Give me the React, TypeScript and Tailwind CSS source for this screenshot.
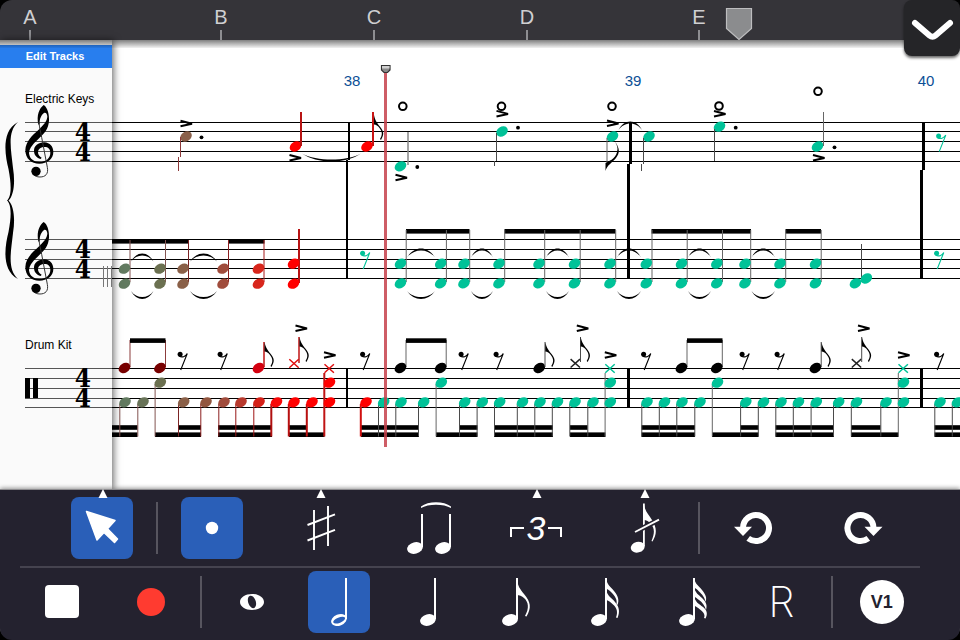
import type { ReactNode } from "react";

const TEAL = "#00c298";
const RED = "#ff0000";
const INK = "#000000";
const STEM = "#4a4a4a";
const SOFT_STEM = "#666666";

const STAVES = [
  [122, 131, 141, 151, 161],
  [239, 249, 259, 268, 278],
  [368, 378, 388, 398, 407],
];

/* ---------- notation primitives ---------- */

function Head({ x, y, c = TEAL }: { x: number; y: number; c?: string }) {
  return <ellipse cx={x} cy={y} rx="6.2" ry="4.7" fill={c} transform={`rotate(-32 ${x} ${y})`} />;
}

function Stem({ x, y1, y2, c = STEM, w = 1 }: { x: number; y1: number; y2: number; c?: string; w?: number }) {
  return <rect x={x - w / 2} y={y1} width={w} height={y2 - y1} fill={c} />;
}

function Beam({ x1, x2, y }: { x1: number; x2: number; y: number }) {
  return <rect x={x1} y={y} width={x2 - x1} height="4.6" fill={INK} />;
}

function Accent({ x, y }: { x: number; y: number }) {
  return <path d={`M${x - 6.5} ${y - 2.8} L${x + 5} ${y + 0.2} L${x - 6.5} ${y + 2.8}`} fill="none" stroke={INK} strokeWidth="2" />;
}

function Ring({ x, y }: { x: number; y: number }) {
  return <circle cx={x} cy={y} r="3.8" fill="none" stroke={INK} strokeWidth="2" />;
}

function Dot({ x, y }: { x: number; y: number }) {
  return <circle cx={x} cy={y} r="1.9" fill={INK} />;
}

function Cross({ x, y, c }: { x: number; y: number; c: string }) {
  return <path d={`M${x - 4.7} ${y - 4.2} L${x + 4.7} ${y + 4.2} M${x - 4.7} ${y + 4.2} L${x + 4.7} ${y - 4.2}`} stroke={c} strokeWidth="1.5" />;
}

function Tie({ x1, x2, y, up = true, h = 9 }: { x1: number; x2: number; y: number; up?: boolean; h?: number }) {
  const s = up ? -1 : 1;
  const q = (x2 - x1) * 0.25;
  const outer = y + (s * (h + 0.5)) / 0.75;
  const inner = y + (s * (h - 1.4)) / 0.75;
  return <path d={`M${x1} ${y} C${x1 + q} ${outer} ${x2 - q} ${outer} ${x2} ${y} C${x2 - q} ${inner} ${x1 + q} ${inner} ${x1} ${y}Z`} fill={INK} />;
}

function Rest({ x, y, c = INK }: { x: number; y: number; c?: string }) {
  return (
    <g transform={`translate(${x} ${y})`}>
      <circle cx="2.6" cy="2.6" r="2.5" fill={c} />
      <path d="M1.5 4.4 C4.5 6 8 5.2 9.8 1.8 L3.2 18.3" fill="none" stroke={c} strokeWidth="1.1" />
    </g>
  );
}

function Flag({ x, y }: { x: number; y: number }) {
  return <path transform={`translate(${x} ${y})`} d="M0 0 C1 6 4 9 7 13 C10.5 18 9.5 20 7 25 L6 24 C8.5 20 8.5 17 5.5 13 C4 11 2 9.5 0 9.5Z" fill={INK} />;
}

/* ---------- score data ---------- */

const CHORDS_PLAYED: [number, string, string][] = [
  [124.5, "#627a60", "#835552"],
  [160, "#6b7050", "#835552"],
  [183, "#8a6048", "#7c2424"],
  [223, "#a04c3c", "#8c2020"],
  [258.5, "#d8261c", "#a81c1c"],
];
const CHORDS = [400.5, 440.7, 464, 499, 539, 574.5, 610, 646.3, 681.5, 716.8, 745, 780, 815.5];
const CHORD_BEAMS = [[406, 469.5], [504.5, 615.5], [651.5, 751], [785.5, 821]];
const TIES = [[407, 435], [471, 493], [546, 569], [617, 641], [688, 711], [751.5, 775]];

const KICKS_PLAYED: [number, string, string, number][] = [
  [125, "#627a60", "#835552", 1],
  [143, "#687358", "#835552", 1],
  [183.7, "#8a6048", "#7c2424", 1],
  [206, "#92563f", "#8c2020", 1],
  [224, "#a04c3c", "#8c2020", 1],
  [241, "#b83a2e", "#981818", 1],
  [259, "#d42018", "#a01414", 1],
  [276.5, "#f80808", "#b01010", 2],
  [294, RED, "#b81010", 2],
  [312, RED, "#b81010", 2],
  [366, RED, "#d01010", 2],
];
const KICKS = [
  383.7, 401, 423.7, 464.7, 482.3, 499.7, 522.5, 540, 557.5, 575, 593, 647, 664.5, 682, 700, 745.8, 763.5, 781, 798.5,
  816.3, 838.7, 856.5, 886, 940, 957.5,
];
const PRIMARY_BEAMS = [
  [112, 137.5], [155, 201], [218, 272], [289, 324.5], [361, 419], [436, 477.5], [494, 553], [570, 605.5],
  [641.5, 695], [712, 758.5], [775.5, 834], [851, 898.5], [934.5, 960],
];
const SECONDARY_BEAMS = [
  [112, 137.5], [178.5, 201], [218, 272], [289, 306.5], [361, 419], [459, 477.5], [494, 553], [570, 587.5],
  [641.5, 695], [740, 758.5], [775.5, 834], [851, 880.5], [934.5, 960],
];
const DRUM_RESTS = [177.5, 217.5, 360, 458.5, 493.5, 641, 739.5, 774.5, 934];

function UpperKeys() {
  return (
    <g>
      <Head x={186} y={136.5} c="#8a604a" />
      <Stem x={180.5} y1={137} y2={157} c="#8c3838" />
      <Stem x={178.5} y1={157} y2={171} c="#8c3838" />
      <Accent x={187} y={123.5} />
      <Dot x={201.5} y={137.3} />

      <Head x={295.5} y={146.5} c={RED} />
      <Stem x={301} y1={112} y2={146} c="#b81414" w={2} />
      <Accent x={296} y={157.8} />
      <Tie x1={302} x2={361} y={153.5} up={false} h={7.5} />
      <Head x={367} y={146.5} c={RED} />
      <Stem x={373} y1={112} y2={146} c="#c81414" w={2} />
      <Flag x={374} y={115} />

      <Head x={400.5} y={166.3} />
      <Stem x={408} y1={132} y2={165} c="#888888" w={1.5} />
      <Accent x={402} y={177.5} />
      <Dot x={417.3} y={167} />
      <Ring x={402.8} y={106.3} />

      <Head x={502} y={131.5} />
      <Stem x={496.5} y1={133} y2={161} />
      <Stem x={494.5} y1={161} y2={166} />
      <Accent x={503} y={113.7} />
      <Dot x={518} y={127.7} />
      <Ring x={501.5} y={106.3} />

      <Head x={612.5} y={136.5} />
      <Stem x={607} y1={138} y2={166} c={SOFT_STEM} />
      <path d="M605.5 171 L605.5 163 C611 160 617 158 617.5 149 C617.5 146 616 143 614.5 141 C620 148 620 153 616 158 C612 163 607 165 605.5 171Z" fill={INK} />
      <Accent x={613.5} y={123.3} />
      <Ring x={612} y={106.3} />
      <Tie x1={618.5} x2={642} y={130} h={8} />

      <Head x={649} y={136.5} />
      <Stem x={643.5} y1={138} y2={164} />
      <Stem x={641.5} y1={164} y2={171} />

      <Head x={719.5} y={126.7} />
      <Stem x={714.5} y1={129} y2={161} />
      <Accent x={720.5} y={113.8} />
      <Dot x={735.7} y={127.7} />
      <Ring x={719} y={106} />

      <Head x={817.5} y={146.5} />
      <Stem x={823.5} y1={112} y2={146} c={SOFT_STEM} />
      <Accent x={819.5} y={157.8} />
      <Dot x={834.5} y={147.3} />
      <Ring x={818} y={91.3} />
      <Rest x={936} y={133.3} c={TEAL} />
    </g>
  );
}

function LowerKeys() {
  return (
    <g>
      <Beam x1={112} x2={189} y={239} />
      <Beam x1={228.5} x2={264.5} y={239} />
      {CHORDS_PLAYED.map(([x, c, s]) => (
        <g key={x}>
          <Stem x={x + 5.5} y1={240} y2={282} c={s} />
          <Head x={x} y={268.7} c={c} />
          <Head x={x} y={283.7} c={c} />
        </g>
      ))}
      {[[131, 153.5], [190, 217]].map(([a, b]) => (
        <g key={a}>
          <Tie x1={a} x2={b} y={261.5} h={7.5} />
          <Tie x1={a} x2={b} y={291} up={false} h={7.5} />
        </g>
      ))}
      <Stem x={299} y1={229} y2={283} c="#b81414" w={2} />
      <Head x={293.5} y={263.7} c={RED} />
      <Head x={293.5} y={283.7} c={RED} />
      <Rest x={360} y={250.7} c={TEAL} />
      {CHORD_BEAMS.map(([a, b]) => (
        <Beam key={a} x1={a} x2={b} y={229} />
      ))}
      {CHORDS.map((x) => (
        <g key={x}>
          <Stem x={x + 5.7} y1={230} y2={282} c={SOFT_STEM} />
          <Head x={x} y={263.7} />
          <Head x={x} y={283.3} />
        </g>
      ))}
      {TIES.map(([a, b]) => (
        <g key={a}>
          <Tie x1={a} x2={b} y={257.5} h={8.5} />
          <Tie x1={a} x2={b} y={291} up={false} h={7.5} />
        </g>
      ))}
      <Stem x={861.5} y1={244} y2={282} />
      <Head x={855.5} y={283.3} />
      <Head x={866.3} y={278.5} />
      <Rest x={934} y={250.7} c={TEAL} />
    </g>
  );
}

const SNARES: [number, string, string][] = [
  [124.5, "#780000", "#8c3c3c"],
  [160, "#780000", "#8c3c3c"],
  [400.5, INK, SOFT_STEM],
  [440.7, INK, SOFT_STEM],
  [681.5, INK, SOFT_STEM],
  [716.8, INK, SOFT_STEM],
];
const TOMS: [number, string, string][] = [
  [160.3, "#6b7050", "#835552"],
  [441.3, TEAL, SOFT_STEM],
  [717.5, TEAL, SOFT_STEM],
];
const CRASHES: [number, string, string, string, number][] = [
  [329.5, RED, "#e01010", "#c01414", 2],
  [610.3, TEAL, TEAL, SOFT_STEM, 1],
  [903.5, TEAL, TEAL, SOFT_STEM, 1],
];

function Drums() {
  return (
    <g>
      {SNARES.map(([x, c, s]) => (
        <g key={x}>
          <Stem x={x + 5.5} y1={340} y2={367} c={s} />
          <Head x={x} y={368} c={c} />
        </g>
      ))}
      {[[130, 165.5], [406, 446.5], [687, 722.5]].map(([a, b]) => (
        <Beam key={a} x1={a} x2={b} y={338.3} />
      ))}
      {DRUM_RESTS.map((x) => (
        <Rest key={x} x={x} y={351.7} />
      ))}
      <Head x={258.5} y={368} c="#d40010" />
      <Stem x={264} y1={342} y2={367} c="#c01414" w={1.5} />
      <Flag x={264.5} y={342} />
      {[539.3, 815.5].map((x) => (
        <g key={x}>
          <Head x={x} y={368} c={INK} />
          <Stem x={x + 5.7} y1={342} y2={367} />
          <Flag x={x + 6} y={342} />
        </g>
      ))}
      <Cross x={294} y={363.5} c="#e01010" />
      <Stem x={299} y1={337} y2={363} c="#c01414" w={1.5} />
      <Flag x={299.5} y={337} />
      <Accent x={302} y={328.3} />
      {[575.3, 856.5].map((x) => (
        <g key={x}>
          <Cross x={x} y={363.3} c="#222222" />
          <Stem x={x + 5.2} y1={337} y2={362} />
          <Flag x={x + 5.4} y={337} />
          <Accent x={x + 8} y={328.3} />
        </g>
      ))}

      {PRIMARY_BEAMS.map(([a, b]) => (
        <Beam key={a} x1={a} x2={b} y={432.4} />
      ))}
      {SECONDARY_BEAMS.map(([a, b]) => (
        <Beam key={a} x1={a} x2={b} y={425.2} />
      ))}
      {KICKS_PLAYED.map(([x, c, s, w]) => (
        <g key={x}>
          <Stem x={x - 5.2} y1={404} y2={436.5} c={s} w={w} />
          <Head x={x} y={402.3} c={c} />
        </g>
      ))}
      {KICKS.map((x) => (
        <g key={x}>
          <Stem x={x - 5.2} y1={404} y2={436.5} />
          <Head x={x} y={402.3} />
        </g>
      ))}
      {TOMS.map(([x, c, s]) => (
        <g key={x}>
          <Stem x={x - 5.2} y1={384} y2={436.5} c={s} />
          <Head x={x} y={382.7} c={c} />
        </g>
      ))}
      {CRASHES.map(([x, c, cross, s, w]) => (
        <g key={x}>
          <Stem x={x - 5.2} y1={373} y2={436.5} c={s} w={w} />
          <Cross x={x - 0.3} y={368.5} c={cross} />
          <Head x={x} y={382.7} c={c} />
          <Head x={x} y={402.3} c={c} />
          <Accent x={x + 1} y={355} />
        </g>
      ))}
    </g>
  );
}

function Barlines() {
  return (
    <g fill={INK}>
      <rect x="348" y="122" width="2" height="38" />
      <rect x="346" y="160" width="2" height="119" />
      <rect x="629" y="122" width="3" height="42" />
      <rect x="627" y="164" width="3" height="115" />
      <rect x="922" y="122" width="3" height="48" />
      <rect x="920" y="170" width="3" height="109" />
      <rect x="346" y="368" width="2" height="40" />
      <rect x="627" y="368" width="3" height="40" />
      <rect x="920" y="368" width="3" height="40" />
    </g>
  );
}

function Score() {
  return (
    <svg viewBox="112 40 848 450" preserveAspectRatio="xMinYMin slice" className="block h-full w-full" role="img" aria-label="Score">
      {STAVES.flat().map((y) => (
        <rect key={y} x="112" y={y} width="848" height="1" fill={INK} />
      ))}
      <Barlines />
      <UpperKeys />
      <LowerKeys />
      <Drums />
      <g fill="#0b4f96" fontSize="15" textAnchor="middle" className="font-['Liberation_Sans',Arial,sans-serif]">
        <text x="352" y="86">38</text>
        <text x="633" y="86">39</text>
        <text x="926" y="86">40</text>
      </g>
      <rect x="384" y="72" width="3" height="375" fill="#c5414b" fillOpacity="0.85" />
      <path d="M381.5 65.5 h8.5 v4.5 l-2.5 2.5 h-3.5 l-2.5 -2.5z" fill="#8a8a8a" stroke="#333333" strokeWidth="1.2" />
      <rect x="382" y="66" width="7.5" height="2.5" fill="#d0d0d0" />
    </svg>
  );
}

/* ---------- track panel ---------- */

function TrebleClef({ y }: { y: number }) {
  return (
    <g transform={`translate(0 ${y - 105}) scale(0.33333)`}>
      <path
        d="M131 315 C143 322 148 345 147 362 C145 388 133 400 118 414 C102 430 88 442 87 460 C89 478 103 486 118 486 C138 486 151 474 151 458 C151 447 144 441 134 441 C120 441 114 449 114 457 C114 465 119 470 125 473 L122 477 C108 473 102 463 102 452 C102 438 114 427 133 427 C150 428 160 440 160 456 C160 477 142 491 118 491 C94 491 76 476 76 450 C77 425 96 407 115 390 C130 376 142 364 142 349 C141 339 136 337 132 339 C124 345 118 357 119 372 L115 374 C109 345 118 325 131 315Z"
        fill={INK}
      />
      <path d="M117 366 C118 384 122 395 125 412 L142 502 C146 522 136 531 120 531 C112 531 104 529 99 522" fill="none" stroke="#333333" strokeWidth="3" />
      <circle cx="108" cy="514" r="14" fill={INK} />
    </g>
  );
}

function TimeSignature({ y }: { y: number }) {
  return (
    <g fill={INK} fontSize="26" fontWeight="700" textAnchor="middle" className="font-['DejaVu_Serif_Condensed','DejaVu_Serif',serif]">
      <text x="83" y={y + 19}>4</text>
      <text x="83" y={y + 39}>4</text>
    </g>
  );
}

function PanelStaff({ lines }: { lines: number[] }) {
  return (
    <g fill="#555555">
      {lines.map((y) => (
        <rect key={y} x="25" y={y} width="87" height="1" />
      ))}
    </g>
  );
}

function TrackPanel() {
  return (
    <aside className="relative z-10 w-28 shrink-0 bg-[#fafafa] shadow-[2px_0_7px_rgba(0,0,0,0.55)]">
      <button type="button" className="mt-[5px] mb-[23px] block h-[23px] w-full bg-[#287eee] pr-0.5 text-[11px] leading-[23px] font-bold text-white">
        Edit Tracks
      </button>
      <h2 className="pl-[25px] text-xs leading-4 text-black">Electric Keys</h2>
      <svg viewBox="0 107 112 230" className="block h-[230px] w-28 overflow-visible" aria-hidden="true">
        <PanelStaff lines={STAVES[0]} />
        <PanelStaff lines={STAVES[1]} />
        <TrebleClef y={105} />
        <TrebleClef y={222} />
        <TimeSignature y={122} />
        <TimeSignature y={239} />
        <path
          d="M18 122 C1 131 5 155 8.5 169 C12 187 11 197 7 200.5 C11 204 12 214 8.5 232 C5 246 1 270 18 279 C7 269 11 252 13 233 C15.5 218 13.5 205 8.5 200.5 C13.5 196 15.5 183 13 168 C11 149 7 132 18 122Z"
          fill={INK}
        />
        <path d="M103.5 266v21 M107.5 266v21 M111.5 266v21" stroke="#777777" strokeWidth="1" />
      </svg>
      <h2 className="pl-[25px] text-xs leading-4 text-black">Drum Kit</h2>
      <svg viewBox="0 353 112 60" className="block h-[60px] w-28" aria-hidden="true">
        <PanelStaff lines={STAVES[2]} />
        <TimeSignature y={368} />
        <rect x="25" y="378" width="5" height="20" fill={INK} />
        <rect x="33" y="378" width="5" height="20" fill={INK} />
      </svg>
    </aside>
  );
}

/* ---------- timeline ---------- */

function Timeline() {
  return (
    <header className="grid h-10 shrink-0 grid-cols-[191fr_153fr_153fr_172fr_40fr_237fr] overflow-hidden rounded-t-xl bg-[#353439] pl-[14px]">
      {["A", "B", "C", "D", "E"].map((name) => (
        <div key={name} className="flex w-8 flex-col items-center">
          <span className="h-[30px] text-xl leading-[34px] text-[#cfcfd1]">{name}</span>
          <span className="h-2.5 w-0.5 bg-[#8e8e92]" />
        </div>
      ))}
      <svg viewBox="0 0 32 40" className="h-10 w-8" role="img" aria-label="Song position">
        <path d="M3.5 8.5 H28.5 V28.5 L16 39.5 L3.5 28.5Z" fill="#8b8c8e" stroke="#bdbdbf" strokeWidth="1.2" />
      </svg>
    </header>
  );
}

/* ---------- toolbar ---------- */

function NoteHead({ x, y = 49 }: { x: number; y?: number }) {
  return <ellipse cx={x} cy={y} rx="8" ry="5.7" transform={`rotate(-14 ${x} ${y})`} />;
}

const ICONS: Record<string, ReactNode> = {
  select: <path d="M15.5 14.5 L44 23.5 L36.5 31.8 L46.5 42 L43.5 45.5 L33 35.5 L26 43Z" stroke="currentColor" strokeWidth="1.5" strokeLinejoin="round" />,
  dot: <circle cx="31" cy="31" r="6.2" />,
  sharp: <path d="M25 13v40 M39 9v40 M18.5 28L46 17.3 M18.5 43.5L46 32.8" fill="none" stroke="currentColor" strokeWidth="1.9" />,
  tie: (
    <g>
      <NoteHead x={18} y={51} />
      <NoteHead x={46} y={51} />
      <rect x="24" y="17" width="2" height="33" />
      <rect x="52" y="17" width="2" height="33" />
      <path d="M24 9.5 C31 3.8 47 3.8 54 9.5 V11 C47 6.5 31 6.5 24 11Z" />
    </g>
  ),
  triplet: (
    <g>
      <path d="M6 40V31H19 M43 31H56V40" fill="none" stroke="currentColor" strokeWidth="2" />
      <text x="31" y="43" fontSize="34" fontStyle="italic" textAnchor="middle">3</text>
    </g>
  ),
  grace: (
    <g>
      <ellipse cx="24.700" cy="50.2" rx="7" ry="5.3" transform="rotate(-14 24.700 50.2)" />
      <rect x="30" y="6.5" width="1.8" height="43" />
      <path d="M31 8 C32.5 15 36 18 39 23 C44 31 44 37 39.5 44.5 L38.5 44 C42 36 41.5 31 38 27 C36 24.5 33 23 31 23Z" />
      <path d="M22 35L46 22.7" stroke="#24222f" strokeWidth="5" />
      <path d="M22 35L46 22.7" stroke="currentColor" strokeWidth="1.9" />
    </g>
  ),
  undo: (
    <g>
      <path d="M20 31 A13 13 0 1 1 25.2 41.4" fill="none" stroke="currentColor" strokeWidth="6" />
      <path d="M11 29.8H29L20 39Z" />
    </g>
  ),
  redo: (
    <g>
      <path d="M42.500 31 A13 13 0 1 0 37.3 41.4" fill="none" stroke="currentColor" strokeWidth="6" />
      <path d="M51.5 29.8H33.5L42.500 39Z" />
    </g>
  ),
  stop: <rect x="14" y="14" width="34" height="33" rx="4" />,
  record: <circle cx="31" cy="31" r="14" fill="#ff3b30" />,
  whole: (
    <path
      fillRule="evenodd"
      d="M20 31 C20 26.500 25.5 23 32 23 C38.5 23 44 26.500 44 31 C44 35.5 38.5 39 32 39 C25.5 39 20 35.5 20 31Z M29.7 25 C27.5 26 27.3 30 28.7 33 C30.1 36.5 33 38 34.5 36.8 C36.5 35.5 36.5 31.500 35.3 29 C34 25.7 31.5 24.2 29.7 25Z"
    />
  ),
  half: (
    <g>
      <path
        fillRule="evenodd"
        transform="rotate(-22 31 49)"
        d="M22.8 49 A8.2 5.6 0 1 1 39.2 49 A8.2 5.6 0 1 1 22.8 49Z M24.8 49.2 A6.3 2.700 0 1 0 37.4 49.2 A6.3 2.700 0 1 0 24.8 49.2Z"
      />
      <rect x="37" y="7" width="2" height="41" />
    </g>
  ),
  quarter: (
    <g>
      <NoteHead x={31} />
      <rect x="37" y="7" width="2" height="41" />
    </g>
  ),
  eighth: (
    <g>
      <NoteHead x={25} />
      <rect x="31" y="7" width="2" height="41" />
      <path d="M32 7 C32.5 15 35 18 39 23 C46 31 46.500 37 41.5 45.5 L40 45 C44.500 37 43.5 31 39 27 C37 25 34 24 32 24Z" />
    </g>
  ),
  sixteenth: (
    <g>
      <NoteHead x={25} />
      <rect x="31" y="7" width="2" height="41" />
      <path d="M32 7 C33 14 37 16 40 20 C44 25 45.5 29 43.5 34 L42.5 33 C43.5 29 41 25 38 22 C36 20 34 18 32 18Z" />
      <path d="M32 18 C33 25 38 27 41 31 C45.5 36 46 41 43.5 47 L42 46.5 C44 41 43 37 39 33.5 C37 31.5 34 29 32 29Z" />
    </g>
  ),
  thirtySecond: (
    <g>
      <NoteHead x={25} />
      <rect x="31" y="7" width="2" height="41" />
      <path d="M32 7 C33 13 37 15 40 19 C44 24 45 27 43.5 31 C43 27 40 23 37 20.5 C35 18.5 34 17 32 17Z" />
      <path d="M32 16 C33 22 37 24 40 27 C44 31 45.5 34 44 39 C43 35 40 31 37 29 C35 27.5 34 26 32 26Z" />
      <path d="M32 25 C33 31 37 33 41 36 C45 39 46 43 43.5 47.5 L42 47 C43.5 44 41.5 41 38 38.5 C36 37 34 35 32 35Z" />
    </g>
  ),
};

type Tool = { id: string; label: string; active?: boolean; menu?: boolean; divider?: boolean };

const EDIT_TOOLS: Tool[] = [
  { id: "select", label: "Select", active: true, menu: true, divider: true },
  { id: "dot", label: "Dotted", active: true },
  { id: "sharp", label: "Accidental", menu: true },
  { id: "tie", label: "Tie" },
  { id: "triplet", label: "Tuplet", menu: true },
  { id: "grace", label: "Grace note", menu: true, divider: true },
  { id: "undo", label: "Undo" },
  { id: "redo", label: "Redo" },
];

const INPUT_TOOLS: Tool[] = [
  { id: "stop", label: "Stop" },
  { id: "record", label: "Record", divider: true },
  { id: "whole", label: "Whole note" },
  { id: "half", label: "Half note", active: true },
  { id: "quarter", label: "Quarter note" },
  { id: "eighth", label: "Eighth note" },
  { id: "sixteenth", label: "Sixteenth note" },
  { id: "thirtySecond", label: "Thirty-second note" },
  { id: "rest", label: "Rest", divider: true },
  { id: "voice", label: "Voice 1" },
];

function ToolButton({ tool }: { tool: Tool }) {
  return (
    <button
      type="button"
      aria-label={tool.label}
      aria-pressed={Boolean(tool.active)}
      className={`relative flex size-[62px] items-center justify-center rounded-lg text-white ${tool.active ? "bg-[#2a5fb8]" : ""}`}
    >
      {tool.menu && (
        <svg viewBox="0 0 10 9" className="absolute -top-2 left-[27px] h-[9px] w-2.5" aria-hidden="true">
          <path d="M5 0L9.5 9H0.5Z" fill="currentColor" />
        </svg>
      )}
      {tool.id === "rest" && <span className="font-['Inter','Roboto',sans-serif] text-[42px] leading-none font-extralight">R</span>}
      {tool.id === "voice" && (
        <span className="flex size-11 items-center justify-center rounded-full bg-white text-lg font-bold text-[#24222f]">V1</span>
      )}
      {ICONS[tool.id] && (
        <svg viewBox="0 0 62 62" fill="currentColor" className="size-[62px]" aria-hidden="true">
          {ICONS[tool.id]}
        </svg>
      )}
    </button>
  );
}

function ToolRow({ tools, className, gap }: { tools: Tool[]; className: string; gap: string }) {
  return (
    <div className={`flex items-center ${className}`}>
      {tools.map((tool) => (
        <div key={tool.id} className="contents">
          <div className="flex flex-1 basis-0 justify-center">
            <ToolButton tool={tool} />
          </div>
          {tool.divider && <div className={`h-[52px] w-0.5 shrink-0 bg-[#57555f] ${gap}`} />}
        </div>
      ))}
    </div>
  );
}

function Toolbar() {
  return (
    <footer className="relative z-20 shrink-0 rounded-b-xl bg-[#24222f] pt-[7px] pb-[7px] shadow-[0_-1px_0_#8d8c8f,0_-2px_4px_rgba(0,0,0,0.4)]">
      <ToolRow tools={EDIT_TOOLS} className="pr-11 pl-12" gap="" />
      <div className="mt-[7px] mr-10 mb-[3px] ml-5 h-0.5 bg-[#45434f]" />
      <ToolRow tools={INPUT_TOOLS} className="pr-[34px] pl-[18px]" gap="mx-[5px]" />
    </footer>
  );
}

export default function App() {
  return (
    <div className="relative flex h-screen flex-col overflow-hidden bg-black font-['Liberation_Sans',Arial,sans-serif]">
      <Timeline />
      <main className="relative flex min-h-0 flex-1 bg-white">
        <TrackPanel />
        <div className="min-w-0 flex-1">
          <Score />
        </div>
        <div className="pointer-events-none absolute inset-x-0 top-0 z-20 h-2 bg-linear-to-b from-black/50 to-black/5" />
      </main>
      <Toolbar />
      <button
        type="button"
        aria-label="Collapse timeline"
        className="absolute top-0 right-0 z-30 size-14 rounded-lg bg-[#252528] shadow-[0_2px_3px_rgba(0,0,0,0.6)]"
      >
        <svg viewBox="0 0 56 56" className="size-14" aria-hidden="true">
          <path d="M11 23 L25.5 35.5 Q28.5 38 31.5 35.5 L46 23" fill="none" stroke="#ffffff" strokeWidth="6" strokeLinecap="round" />
        </svg>
      </button>
    </div>
  );
}
